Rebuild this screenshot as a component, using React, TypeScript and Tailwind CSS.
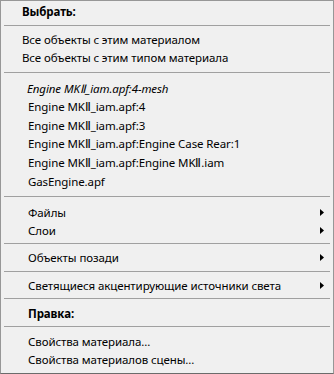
import React from "react";

const Sep = ({ mt }: { mt: string }) => (
  <div className={`${mt} mx-[3px] h-px bg-[#a0a0a0]`} />
);

const Arrow = () => (
  <svg width="4" height="7" viewBox="0 0 4 7" className="absolute left-[319px]">
    <path d="M0 0 L4 3.5 L0 7 Z" fill="#000" />
  </svg>
);

const Row = ({
  children,
  indent = "pl-[27px]",
  className = "",
  arrow = false,
  h = "h-[18px]",
}: {
  children: React.ReactNode;
  indent?: string;
  className?: string;
  arrow?: boolean;
  h?: string;
}) => (
  <div className={`relative flex items-center ${h} ${indent} ${className}`}>
    <span className="whitespace-nowrap">{children}</span>
    {arrow && <Arrow />}
  </div>
);

export default function App() {
  return (
    <div
      className="w-[334px] h-[374px] bg-[#f0f0f0] border border-[#979797] border-b-[#6b6b6b] text-black text-[11.5px] tracking-[-0.1px] leading-none overflow-hidden"
      style={{ fontFamily: '"Noto Sans", "Open Sans", sans-serif' }}
    >
      <div className="mt-[2px]">
        <Row indent="pl-[21px]" className="font-bold">Выбрать:</Row>
      </div>
      <Sep mt="mt-[4px]" />
      <div className="mt-[5px]">
        <Row indent="pl-[21px]">Все объекты с этим материалом</Row>
        <Row indent="pl-[21px]">Все объекты с этим типом материала</Row>
      </div>
      <Sep mt="mt-[5px]" />
      <div className="mt-[6px]">
        <Row h="h-[18.6px]" indent="pl-[26px]" className="italic">Engine MKⅡ_iam.apf:4-mesh</Row>
        <Row h="h-[18.6px]">Engine MKⅡ_iam.apf:4</Row>
        <Row h="h-[18.6px]">Engine MKⅡ_iam.apf:3</Row>
        <Row h="h-[18.6px]">Engine MKⅡ_iam.apf:Engine Case Rear:1</Row>
        <Row h="h-[18.6px]">Engine MKⅡ_iam.apf:Engine MKⅡ.iam</Row>
        <Row h="h-[18.6px]">GasEngine.apf</Row>
      </div>
      <Sep mt="mt-[5.4px]" />
      <div className="mt-[7px]">
        <Row arrow>Файлы</Row>
        <Row arrow>Слои</Row>
      </div>
      <Sep mt="mt-[3px]" />
      <div className="mt-[5px]">
        <Row arrow>Объекты позади</Row>
      </div>
      <Sep mt="mt-[4px]" />
      <div className="mt-[5px]">
        <Row arrow>Светящиеся акцентирующие источники света</Row>
      </div>
      <Sep mt="mt-[3px]" />
      <div className="mt-[6px]">
        <Row className="font-bold">Правка:</Row>
      </div>
      <Sep mt="mt-[3px]" />
      <div className="mt-[6px]">
        <Row>Свойства материала...</Row>
        <Row>Свойства материалов сцены...</Row>
      </div>
    </div>
  );
}
